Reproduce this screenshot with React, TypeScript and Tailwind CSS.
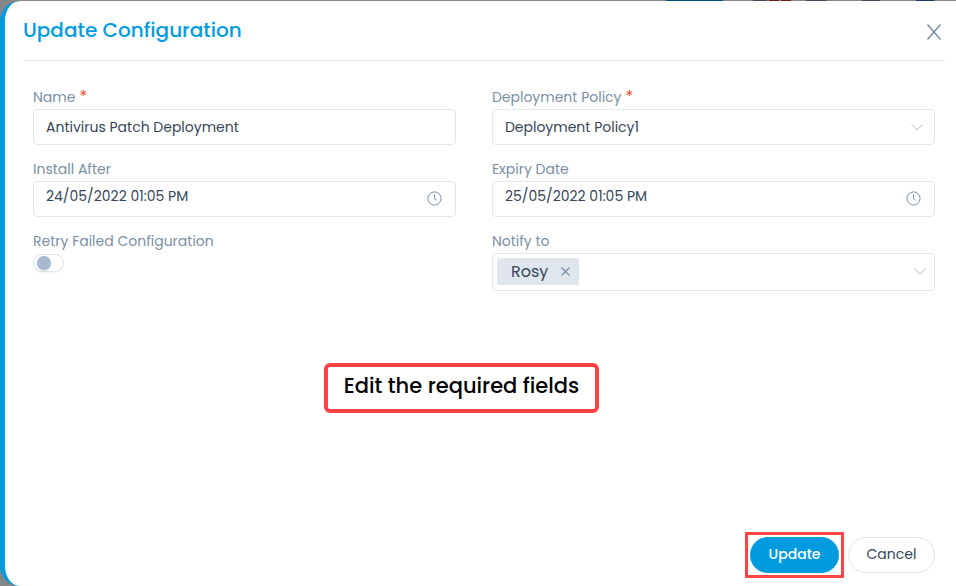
import { useState } from "react";
import type { ReactNode } from "react";

const inputClass =
  "block h-9 w-full rounded border border-[#dfe6ee] bg-white px-3 text-sm text-[#364658] outline-none focus:border-[#009bdf]";

interface FieldProps {
  id: string;
  label: string;
  required?: boolean;
  children: ReactNode;
}

function Field({ id, label, required, children }: FieldProps) {
  return (
    <div>
      <label
        htmlFor={id}
        className="flex h-6 items-center gap-1 text-sm text-[#7b8fa5]"
      >
        {label}
        {required && (
          <span className="self-start text-base leading-6 text-[#f04c32]">*</span>
        )}
      </label>
      {children}
    </div>
  );
}

function Chevron() {
  return (
    <svg width="12" height="7" viewBox="0 0 12 7" fill="none" stroke="#a5bad0">
      <path d="M0.5 0.5 6 6 11.5 0.5" />
    </svg>
  );
}

function Clock() {
  return (
    <svg width="15" height="15" viewBox="0 0 15 15" fill="none" stroke="#7b8fa5">
      <circle cx="7.5" cy="7.5" r="6.6" />
      <path d="M7.5 3.5v4.2l2.2 1.6" />
    </svg>
  );
}

interface DateInputProps {
  id: string;
  value: string;
  onChange: (value: string) => void;
}

function DateInput({ id, value, onChange }: DateInputProps) {
  return (
    <div className="relative">
      <input
        id={id}
        type="text"
        value={value}
        onChange={(e) => onChange(e.target.value)}
        className={`${inputClass} pr-10 pb-1.5`}
      />
      <span className="pointer-events-none absolute top-0 right-3.5 flex h-8.5 items-center">
        <Clock />
      </span>
    </div>
  );
}

export default function App() {
  const [name, setName] = useState("Antivirus Patch Deployment");
  const [policy, setPolicy] = useState("Deployment Policy1");
  const [installAfter, setInstallAfter] = useState("24/05/2022 01:05 PM");
  const [expiry, setExpiry] = useState("25/05/2022 01:05 PM");
  const [retry, setRetry] = useState(false);
  const [notify, setNotify] = useState(["Rosy"]);

  return (
    <div className="flex min-h-screen flex-col bg-[#868686] font-['Poppins','Inter',sans-serif]">
      {/* sliver of the page behind the drawer */}
      <div className="flex h-px justify-end pr-[22px]">
        <span className="mr-[30px] w-[57px] bg-[#04527a]" />
        <span className="mr-0.5 w-3.5 bg-[#434a5c]" />
        <span className="mr-0.5 w-2.5 bg-[#741f1f]" />
        <span className="mr-[15px] w-2.5 bg-[#741f1f]" />
        <span className="mr-[35px] w-[21px] bg-[#434a5c]" />
        <span className="mr-9 w-[18px] bg-[#434a5c]" />
        <span className="w-[18px] bg-[#1b3766]" />
      </div>

      <form
        onSubmit={(e) => e.preventDefault()}
        className="flex grow flex-col rounded-l-[20px] border-l-[5px] border-[#009bdf] bg-white"
      >
        <header className="mr-[11px] ml-[18px] flex h-[60px] items-center justify-between border-b border-[#dfe6ee] pb-0.5">
          <h1 className="text-xl font-medium text-[#009bdf]">
            Update Configuration
          </h1>
          <button type="button" aria-label="Close" className="mt-1 mr-px p-0.5">
            <svg width="16" height="16" viewBox="0 0 16 16" fill="none" stroke="#7b8fa5" strokeWidth="1.5">
              <path d="M1.5 0.5 14.5 15.5M14.5 0.5 1.5 15.5" />
            </svg>
          </button>
        </header>

        <div className="grid grid-cols-[21fr_22fr] gap-x-9 gap-y-3 pt-6 pr-[21px] pl-7">
          <Field id="name" label="Name" required>
            <input
              id="name"
              type="text"
              required
              value={name}
              onChange={(e) => setName(e.target.value)}
              className={inputClass}
            />
          </Field>

          <Field id="policy" label="Deployment Policy" required>
            <div className="relative">
              <select
                id="policy"
                value={policy}
                onChange={(e) => setPolicy(e.target.value)}
                className={`${inputClass} appearance-none`}
              >
                <option>Deployment Policy1</option>
              </select>
              <span className="pointer-events-none absolute inset-y-0 right-3 flex items-center">
                <Chevron />
              </span>
            </div>
          </Field>

          <Field id="install-after" label="Install After">
            <DateInput
              id="install-after"
              value={installAfter}
              onChange={setInstallAfter}
            />
          </Field>

          <Field id="expiry" label="Expiry Date">
            <DateInput id="expiry" value={expiry} onChange={setExpiry} />
          </Field>

          <Field id="retry" label="Retry Failed Configuration">
            <input
              id="retry"
              type="checkbox"
              role="switch"
              checked={retry}
              onChange={(e) => setRetry(e.target.checked)}
              className="mt-px flex h-[18px] w-[31px] appearance-none items-center rounded-full border border-[#dfe6ee] bg-white px-[3px] shadow-xs before:size-3.5 before:rounded-full before:bg-[#a5bad0] before:shadow-sm checked:justify-end checked:before:bg-[#009bdf]"
            />
          </Field>

          <Field id="notify" label="Notify to">
            <div className="flex h-[38px] items-center gap-2 rounded border border-[#dfe6ee] pr-2 pb-px pl-1">
              {notify.map((user) => (
                <span
                  key={user}
                  className="flex h-[27px] items-center gap-3 rounded-xs bg-[#dfe6ee] pr-2 pl-3.5 text-base text-[#364658]"
                >
                  {user}
                  <button
                    type="button"
                    aria-label={`Remove ${user}`}
                    onClick={() => setNotify(notify.filter((n) => n !== user))}
                  >
                    <svg width="11" height="11" viewBox="0 0 11 11" fill="none" stroke="#7b8fa5" strokeWidth="1.3">
                      <path d="M1.5 1.5l8 8M9.5 1.5l-8 8" />
                    </svg>
                  </button>
                </span>
              ))}
              <input
                id="notify"
                type="text"
                className="h-full min-w-0 grow text-sm text-[#364658] outline-none"
              />
              <Chevron />
            </div>
          </Field>
        </div>

        <div className="flex grow items-start justify-center pt-[72px] pr-[38px]">
          <p className="h-[50px] rounded-md border-4 border-[#ff4444] px-4 text-[21px] leading-[38px] font-medium text-black">
            Edit the required fields
          </p>
        </div>

        <footer className="flex items-center justify-end gap-1 pr-[21px] pb-2">
          <div className="border-3 border-[#ff4444] p-0.5">
            <button
              type="submit"
              className="block h-9 w-[89px] rounded-full bg-[#009bdf] pb-0.5 text-sm font-medium text-white"
            >
              Update
            </button>
          </div>
          <button
            type="button"
            className="h-9 w-[87px] rounded-full border border-[#dfe6ee] bg-white pb-0.5 text-sm text-[#364658]"
          >
            Cancel
          </button>
        </footer>
      </form>
    </div>
  );
}
